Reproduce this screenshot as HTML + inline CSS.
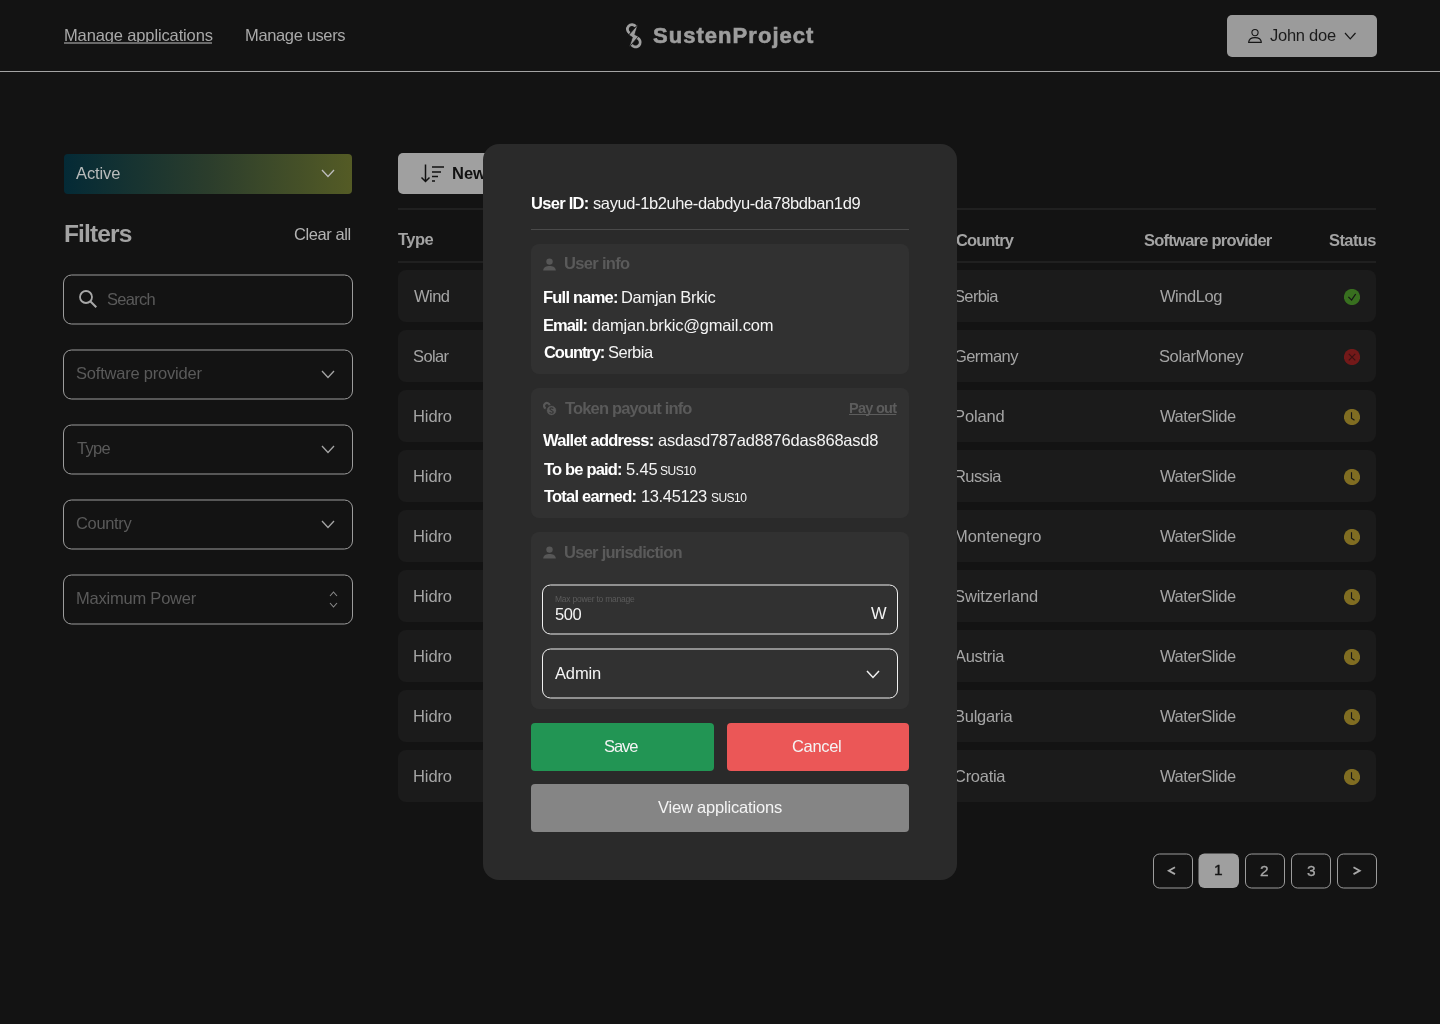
<!DOCTYPE html>
<html><head><meta charset="utf-8">
<style>
*{margin:0;padding:0;box-sizing:border-box}
html,body{width:1440px;height:1024px;overflow:hidden;background:#131313;font-family:"Liberation Sans",sans-serif}
.a{position:absolute;display:block}
.t{position:absolute;white-space:nowrap;line-height:1;will-change:transform}
.row{position:absolute;left:398px;width:978px;height:52px;background:#1b1b1b;border-radius:8px}
.card{position:absolute;left:531px;width:378px;background:#313131;border-radius:8px}
</style></head><body>

<!-- NAV -->
<div class="t" id="nav1" style="left:63.80px;top:27.00px;font-size:16.5px;font-weight:400;color:#a9a9a9;letter-spacing:-0.133px;">Manage applications</div>
<div class="a" style="left:64px;top:42px;width:148px;height:2px;background:#6a6a6a"></div>
<div class="t" id="nav2" style="left:244.60px;top:27.00px;font-size:16.5px;font-weight:400;color:#a9a9a9;letter-spacing:-0.364px;">Manage users</div>
<svg class="a" style="left:620px;top:18px" width="30" height="34" viewBox="620 18 30 34">
<path d="M635.77 26.56 A4.6 4.6 0 1 0 629.7 33.18" stroke="#9f9f9f" stroke-width="2.8" fill="none"/>
<path d="M634.2 37.9 A4.6 4.6 0 1 1 631.6 44.6" stroke="#9f9f9f" stroke-width="2.8" fill="none"/>
<path d="M637.9 24.6 L634.8 34.6 L638.4 36.4 L629.2 47.2 L632.4 37.3 L628.8 35.0 Z" fill="#9f9f9f" stroke="#131313" stroke-width="0.7" stroke-linejoin="miter"/>
</svg>
<div class="t" id="logo" style="left:653.25px;top:25.00px;font-size:22px;font-weight:700;color:#9d9d9d;letter-spacing:1.042px;-webkit-text-stroke:0.6px #9d9d9d;">SustenProject</div>
<div class="a" style="left:0;top:71px;width:1440px;height:1px;background:#a4a4a4"></div>
<div class="a" style="left:1227px;top:15px;width:150px;height:42px;background:#9b9b9b;border-radius:5px"></div>
<svg class="a" style="left:1247px;top:28px" width="16" height="16" viewBox="0 0 16 16">
<circle cx="8" cy="4.6" r="3.1" stroke="#161616" stroke-width="1.1" fill="none"/>
<path d="M1.6 14.4 C1.9 11.3 4.7 9.6 8 9.6 C11.3 9.6 14.1 11.3 14.4 14.4 Z" stroke="#161616" stroke-width="1.1" fill="none" stroke-linejoin="round"/>
</svg>
<div class="t" id="john" style="left:1270.10px;top:27.00px;font-size:16.5px;font-weight:400;color:#1c1c1c;letter-spacing:-0.257px;">John doe</div>
<svg class="a" style="left:1343px;top:31px" width="14.5" height="9.8" viewBox="-2 -2 14.5 9.8"><path d="M0 0L5.25 5.8L10.5 0" stroke="#161616" stroke-width="1.2" fill="none"/></svg>

<!-- SIDEBAR -->
<div class="a" style="left:64px;top:153.5px;width:288px;height:40px;border-radius:4px;background:linear-gradient(90deg,#042a36 0%,#2b3d2c 50%,#545b25 100%)"></div>
<div class="t" id="active" style="left:75.70px;top:165.00px;font-size:16.5px;font-weight:400;color:#b8bcbc;letter-spacing:-0.120px;">Active</div>
<svg class="a" style="left:320px;top:168px" width="16" height="10.5" viewBox="-2 -2 16 10.5"><path d="M0 0L6.0 6.5L12 0" stroke="#bdbdbd" stroke-width="1.3" fill="none"/></svg>
<div class="t" id="filters" style="left:64.00px;top:222.00px;font-size:24.5px;font-weight:700;color:#a3a3a3;letter-spacing:-0.867px;">Filters</div>
<div class="t" id="clear" style="left:293.90px;top:226.00px;font-size:16.5px;font-weight:400;color:#b3b3b3;letter-spacing:-0.425px;">Clear all</div>
<svg class="a" style="left:61px;top:273px" width="293" height="53"><rect x="2.5" y="2" width="289" height="49" rx="8" stroke="#9c9c9c" stroke-width="1" fill="none"/></svg>
<svg class="a" style="left:78px;top:289px" width="20" height="20" viewBox="0 0 20 20">
<circle cx="8" cy="8" r="6" stroke="#a8a8a8" stroke-width="1.8" fill="none"/>
<path d="M12.3 12.3L18.3 18.3" stroke="#a8a8a8" stroke-width="2" fill="none"/>
</svg>
<div class="t" id="search" style="left:107.25px;top:291.00px;font-size:16.5px;font-weight:400;color:#5a5a5a;letter-spacing:-0.700px;">Search</div>
<svg class="a" style="left:61px;top:348px" width="293" height="53"><rect x="2.5" y="2" width="289" height="49" rx="8" stroke="#9c9c9c" stroke-width="1" fill="none"/></svg>
<div class="t" id="ph1" style="left:75.80px;top:365.00px;font-size:16.5px;font-weight:400;color:#5a5a5a;letter-spacing:-0.213px;">Software provider</div>
<svg class="a" style="left:320px;top:369px" width="16" height="10.5" viewBox="-2 -2 16 10.5"><path d="M0 0L6.0 6.5L12 0" stroke="#a5a5a5" stroke-width="1.3" fill="none"/></svg>
<svg class="a" style="left:61px;top:423px" width="293" height="53"><rect x="2.5" y="2" width="289" height="49" rx="8" stroke="#9c9c9c" stroke-width="1" fill="none"/></svg>
<div class="t" id="ph2" style="left:76.80px;top:440.00px;font-size:16.5px;font-weight:400;color:#5a5a5a;letter-spacing:-0.733px;">Type</div>
<svg class="a" style="left:320px;top:444px" width="16" height="10.5" viewBox="-2 -2 16 10.5"><path d="M0 0L6.0 6.5L12 0" stroke="#a5a5a5" stroke-width="1.3" fill="none"/></svg>
<svg class="a" style="left:61px;top:498px" width="293" height="53"><rect x="2.5" y="2" width="289" height="49" rx="8" stroke="#9c9c9c" stroke-width="1" fill="none"/></svg>
<div class="t" id="ph3" style="left:75.80px;top:515.00px;font-size:16.5px;font-weight:400;color:#5a5a5a;letter-spacing:-0.333px;">Country</div>
<svg class="a" style="left:320px;top:519px" width="16" height="10.5" viewBox="-2 -2 16 10.5"><path d="M0 0L6.0 6.5L12 0" stroke="#a5a5a5" stroke-width="1.3" fill="none"/></svg>
<svg class="a" style="left:61px;top:573px" width="293" height="53"><rect x="2.5" y="2" width="289" height="49" rx="8" stroke="#9c9c9c" stroke-width="1" fill="none"/></svg>
<div class="t" id="ph4" style="left:75.80px;top:590.00px;font-size:16.5px;font-weight:400;color:#5a5a5a;letter-spacing:-0.217px;">Maximum Power</div>
<svg class="a" style="left:328px;top:601px" width="11" height="8" viewBox="-2 -2 11 8"><path d="M0 0L3.5 4L7 0" stroke="#8a8a8a" stroke-width="1.1" fill="none"/></svg>
<svg class="a" style="left:328px;top:590px" width="11" height="8" viewBox="-2 -2 11 8"><path d="M0 4L3.5 0L7 4" stroke="#8a8a8a" stroke-width="1.1" fill="none"/></svg>

<!-- TABLE -->
<div class="a" style="left:398px;top:153px;width:160px;height:40.5px;background:#a0a0a0;border-radius:5px"></div>
<svg class="a" style="left:419px;top:162px" width="28" height="22" viewBox="0 0 28 22">
<path d="M6.5 2.5V19.5M2.5 15.5L6.5 19.5L10.5 15.5" stroke="#111" stroke-width="1.5" fill="none"/>
<path d="M13 5H25M13 10H22M13 14.5H19M13 19H16" stroke="#111" stroke-width="1.5" fill="none"/>
</svg>
<div class="t" id="new" style="left:451.60px;top:165.00px;font-size:16.5px;font-weight:700;color:#111111;">New</div>
<div class="a" style="left:398px;top:208px;width:978px;height:2px;background:#202020"></div>
<div class="a" style="left:398px;top:261px;width:978px;height:2px;background:#202020"></div>
<div class="t" id="h1" style="left:398.40px;top:231.00px;font-size:16.5px;font-weight:700;color:#a3a3a3;letter-spacing:-0.533px;">Type</div>
<div class="t" id="h2" style="left:956.00px;top:232.00px;font-size:16.5px;font-weight:700;color:#a3a3a3;letter-spacing:-0.900px;">Country</div>
<div class="t" id="h3" style="left:1143.50px;top:232.00px;font-size:16.5px;font-weight:700;color:#a3a3a3;letter-spacing:-0.750px;">Software provider</div>
<div class="t" id="h4" style="left:1329.00px;top:232.00px;font-size:16.5px;font-weight:700;color:#a3a3a3;letter-spacing:-0.600px;">Status</div>
<div class="row" style="top:270.3px"></div>
<div class="t" id="ty0" style="left:414.20px;top:288.00px;font-size:16.5px;font-weight:400;color:#a5a5a5;letter-spacing:-0.533px;">Wind</div>
<div class="t" id="co0" style="left:953.50px;top:288.00px;font-size:16.5px;font-weight:400;color:#a5a5a5;letter-spacing:-0.644px;">Serbia</div>
<div class="t" id="pr0" style="left:1159.50px;top:288.00px;font-size:16.5px;font-weight:400;color:#a5a5a5;letter-spacing:-0.467px;">WindLog</div>
<svg class="a" style="left:1344px;top:288.5px" width="16" height="16" viewBox="0 0 16 16"><circle cx="8" cy="8" r="8.1" fill="#386f1f"/><path d="M4.4 7.9l3.2 3.2 4.1-6.1" stroke="#161616" stroke-width="1.3" fill="none"/></svg>
<div class="row" style="top:330.3px"></div>
<div class="t" id="ty1" style="left:413.20px;top:348.00px;font-size:16.5px;font-weight:400;color:#a5a5a5;letter-spacing:-0.600px;">Solar</div>
<div class="t" id="co1" style="left:953.50px;top:348.00px;font-size:16.5px;font-weight:400;color:#a5a5a5;letter-spacing:-0.578px;">Germany</div>
<div class="t" id="pr1" style="left:1158.50px;top:348.00px;font-size:16.5px;font-weight:400;color:#a5a5a5;letter-spacing:-0.400px;">SolarMoney</div>
<svg class="a" style="left:1344px;top:348.5px" width="16" height="16" viewBox="0 0 16 16"><circle cx="8" cy="8" r="8.1" fill="#731919"/><path d="M4.8 4.8l6.5 6.5M11.3 4.8l-6.5 6.5" stroke="#3a1212" stroke-width="1.2" fill="none"/></svg>
<div class="row" style="top:390.3px"></div>
<div class="t" id="ty2" style="left:413.20px;top:408.00px;font-size:16.5px;font-weight:400;color:#a5a5a5;letter-spacing:-0.100px;">Hidro</div>
<div class="t" id="co2" style="left:953.50px;top:408.00px;font-size:16.5px;font-weight:400;color:#a5a5a5;letter-spacing:-0.124px;">Poland</div>
<div class="t" id="pr2" style="left:1159.50px;top:408.00px;font-size:16.5px;font-weight:400;color:#a5a5a5;letter-spacing:-0.444px;">WaterSlide</div>
<svg class="a" style="left:1344px;top:408.5px" width="16" height="16" viewBox="0 0 16 16"><circle cx="8" cy="8" r="8.1" fill="#806d22"/><path d="M7.5 3.3V9.2L10.5 11.2" stroke="#161616" stroke-width="1.15" fill="none"/></svg>
<div class="row" style="top:450.3px"></div>
<div class="t" id="ty3" style="left:413.20px;top:468.00px;font-size:16.5px;font-weight:400;color:#a5a5a5;letter-spacing:-0.100px;">Hidro</div>
<div class="t" id="co3" style="left:953.50px;top:468.00px;font-size:16.5px;font-weight:400;color:#a5a5a5;letter-spacing:-0.604px;">Russia</div>
<div class="t" id="pr3" style="left:1159.50px;top:468.00px;font-size:16.5px;font-weight:400;color:#a5a5a5;letter-spacing:-0.444px;">WaterSlide</div>
<svg class="a" style="left:1344px;top:468.5px" width="16" height="16" viewBox="0 0 16 16"><circle cx="8" cy="8" r="8.1" fill="#806d22"/><path d="M7.5 3.3V9.2L10.5 11.2" stroke="#161616" stroke-width="1.15" fill="none"/></svg>
<div class="row" style="top:510.3px"></div>
<div class="t" id="ty4" style="left:413.20px;top:528.00px;font-size:16.5px;font-weight:400;color:#a5a5a5;letter-spacing:-0.100px;">Hidro</div>
<div class="t" id="co4" style="left:953.50px;top:528.00px;font-size:16.5px;font-weight:400;color:#a5a5a5;letter-spacing:-0.067px;">Montenegro</div>
<div class="t" id="pr4" style="left:1159.50px;top:528.00px;font-size:16.5px;font-weight:400;color:#a5a5a5;letter-spacing:-0.444px;">WaterSlide</div>
<svg class="a" style="left:1344px;top:528.5px" width="16" height="16" viewBox="0 0 16 16"><circle cx="8" cy="8" r="8.1" fill="#806d22"/><path d="M7.5 3.3V9.2L10.5 11.2" stroke="#161616" stroke-width="1.15" fill="none"/></svg>
<div class="row" style="top:570.3px"></div>
<div class="t" id="ty5" style="left:413.20px;top:588.00px;font-size:16.5px;font-weight:400;color:#a5a5a5;letter-spacing:-0.100px;">Hidro</div>
<div class="t" id="co5" style="left:953.50px;top:588.00px;font-size:16.5px;font-weight:400;color:#a5a5a5;letter-spacing:-0.104px;">Switzerland</div>
<div class="t" id="pr5" style="left:1159.50px;top:588.00px;font-size:16.5px;font-weight:400;color:#a5a5a5;letter-spacing:-0.444px;">WaterSlide</div>
<svg class="a" style="left:1344px;top:588.5px" width="16" height="16" viewBox="0 0 16 16"><circle cx="8" cy="8" r="8.1" fill="#806d22"/><path d="M7.5 3.3V9.2L10.5 11.2" stroke="#161616" stroke-width="1.15" fill="none"/></svg>
<div class="row" style="top:630.3px"></div>
<div class="t" id="ty6" style="left:413.20px;top:648.00px;font-size:16.5px;font-weight:400;color:#a5a5a5;letter-spacing:-0.100px;">Hidro</div>
<div class="t" id="co6" style="left:954.50px;top:648.00px;font-size:16.5px;font-weight:400;color:#a5a5a5;letter-spacing:-0.311px;">Austria</div>
<div class="t" id="pr6" style="left:1159.50px;top:648.00px;font-size:16.5px;font-weight:400;color:#a5a5a5;letter-spacing:-0.444px;">WaterSlide</div>
<svg class="a" style="left:1344px;top:648.5px" width="16" height="16" viewBox="0 0 16 16"><circle cx="8" cy="8" r="8.1" fill="#806d22"/><path d="M7.5 3.3V9.2L10.5 11.2" stroke="#161616" stroke-width="1.15" fill="none"/></svg>
<div class="row" style="top:690.3px"></div>
<div class="t" id="ty7" style="left:413.20px;top:708.00px;font-size:16.5px;font-weight:400;color:#a5a5a5;letter-spacing:-0.100px;">Hidro</div>
<div class="t" id="co7" style="left:953.50px;top:708.00px;font-size:16.5px;font-weight:400;color:#a5a5a5;letter-spacing:-0.273px;">Bulgaria</div>
<div class="t" id="pr7" style="left:1159.50px;top:708.00px;font-size:16.5px;font-weight:400;color:#a5a5a5;letter-spacing:-0.444px;">WaterSlide</div>
<svg class="a" style="left:1344px;top:708.5px" width="16" height="16" viewBox="0 0 16 16"><circle cx="8" cy="8" r="8.1" fill="#806d22"/><path d="M7.5 3.3V9.2L10.5 11.2" stroke="#161616" stroke-width="1.15" fill="none"/></svg>
<div class="row" style="top:750.3px"></div>
<div class="t" id="ty8" style="left:413.20px;top:768.00px;font-size:16.5px;font-weight:400;color:#a5a5a5;letter-spacing:-0.100px;">Hidro</div>
<div class="t" id="co8" style="left:953.50px;top:768.00px;font-size:16.5px;font-weight:400;color:#a5a5a5;letter-spacing:-0.278px;">Croatia</div>
<div class="t" id="pr8" style="left:1159.50px;top:768.00px;font-size:16.5px;font-weight:400;color:#a5a5a5;letter-spacing:-0.444px;">WaterSlide</div>
<svg class="a" style="left:1344px;top:768.5px" width="16" height="16" viewBox="0 0 16 16"><circle cx="8" cy="8" r="8.1" fill="#806d22"/><path d="M7.5 3.3V9.2L10.5 11.2" stroke="#161616" stroke-width="1.15" fill="none"/></svg>

<!-- PAGINATION -->
<svg class="a" style="left:1151px;top:852px" width="43" height="38"><rect x="2.5" y="2" width="39" height="34" rx="6" stroke="#9c9c9c" stroke-width="1" fill="none"/></svg>
<svg class="a" style="left:1166px;top:865px" width="12" height="12" viewBox="0 0 12 12"><path d="M9 2.3L2.8 5.7L9 9.1" stroke="#a8a8a8" stroke-width="1.8" fill="none"/></svg>
<svg class="a" style="left:1196px;top:851px" width="44" height="38"><rect x="2.5" y="2.5" width="40.5" height="34.5" rx="6" stroke="none" stroke-width="0" fill="#9f9f9f"/></svg>
<div class="t" id="pg1" style="left:1213.60px;top:862.00px;font-size:15.5px;font-weight:400;color:#161616;-webkit-text-stroke:0.4px #161616;">1</div>
<svg class="a" style="left:1243px;top:852px" width="43" height="38"><rect x="2.5" y="2" width="39" height="34" rx="6" stroke="#9c9c9c" stroke-width="1" fill="none"/></svg>
<div class="t" id="pg2" style="left:1260.20px;top:863.00px;font-size:15.5px;font-weight:400;color:#a8a8a8;-webkit-text-stroke:0.3px #a8a8a8;">2</div>
<svg class="a" style="left:1289px;top:852px" width="43" height="38"><rect x="2.5" y="2" width="39" height="34" rx="6" stroke="#9c9c9c" stroke-width="1" fill="none"/></svg>
<div class="t" id="pg3" style="left:1306.50px;top:863.00px;font-size:15.5px;font-weight:400;color:#a8a8a8;-webkit-text-stroke:0.3px #a8a8a8;">3</div>
<svg class="a" style="left:1335px;top:852px" width="43" height="38"><rect x="2.5" y="2" width="39" height="34" rx="6" stroke="#9c9c9c" stroke-width="1" fill="none"/></svg>
<svg class="a" style="left:1351px;top:865px" width="12" height="12" viewBox="0 0 12 12"><path d="M2.5 2.3L8.7 5.7L2.5 9.1" stroke="#a8a8a8" stroke-width="1.8" fill="none"/></svg>

<!-- MODAL -->
<div class="a" style="left:483px;top:144px;width:474px;height:735.5px;background:#2a2a2a;border-radius:16px"></div>
<div class="t" id="uid_l" style="left:530.80px;top:195.00px;font-size:16.5px;font-weight:700;color:#ffffff;letter-spacing:-0.714px;">User ID:</div>
<div class="t" id="uid_v" style="left:592.50px;top:195.00px;font-size:16.5px;font-weight:400;color:#f4f4f4;letter-spacing:-0.394px;">sayud-1b2uhe-dabdyu-da78bdban1d9</div>
<div class="a" style="left:531px;top:229px;width:378px;height:1px;background:#4a4a4a"></div>

<div class="card" style="top:244px;height:130px"></div>
<svg class="a" style="left:542px;top:257px" width="15" height="15" viewBox="0 0 15 15">
<circle cx="7.5" cy="4.6" r="3.2" fill="#575757"/>
<path d="M1.2 13.6 C1.2 10.2 4.2 9 7.5 9 C10.8 9 13.8 10.2 13.8 13.6 Z" fill="#575757"/>
</svg>
<div class="t" id="ui_t" style="left:563.80px;top:255.00px;font-size:16.5px;font-weight:700;color:#5a5a5a;letter-spacing:-0.675px;">User info</div>
<div class="t" id="fn_l" style="left:542.90px;top:289.00px;font-size:16.5px;font-weight:700;color:#ffffff;letter-spacing:-0.778px;">Full name:</div>
<div class="t" id="fn_v" style="left:621.20px;top:289.00px;font-size:16.5px;font-weight:400;color:#f4f4f4;letter-spacing:-0.309px;">Damjan Brkic</div>
<div class="t" id="em_l" style="left:542.90px;top:317.00px;font-size:16.5px;font-weight:700;color:#ffffff;letter-spacing:-0.920px;">Email:</div>
<div class="t" id="em_v" style="left:591.90px;top:317.00px;font-size:16.5px;font-weight:400;color:#f4f4f4;letter-spacing:-0.190px;">damjan.brkic@gmail.com</div>
<div class="t" id="cn_l" style="left:543.90px;top:344.00px;font-size:16.5px;font-weight:700;color:#ffffff;letter-spacing:-1.057px;">Country:</div>
<div class="t" id="cn_v" style="left:608.30px;top:344.00px;font-size:16.5px;font-weight:400;color:#f4f4f4;letter-spacing:-0.520px;">Serbia</div>

<div class="card" style="top:387.5px;height:130.5px"></div>
<svg class="a" style="left:538px;top:396px" width="24" height="24" viewBox="538 396 24 24">
<path d="M549.76 405.4 A2.9 2.9 0 1 0 545.67 408.53" stroke="#585858" stroke-width="2.2" fill="none"/>
<circle cx="551.5" cy="410.5" r="5.0" fill="#585858" stroke="#313131" stroke-width="0.9"/>
<path d="M553.1 408.9 C553.0 408.1 552.3 407.8 551.5 407.8 C550.6 407.8 549.9 408.3 549.9 409.0 C549.9 410.6 553.2 410.3 553.2 411.9 C553.2 412.7 552.4 413.2 551.5 413.2 C550.6 413.2 549.9 412.8 549.8 412.0" stroke="#333" stroke-width="1.15" fill="none"/>
</svg>
<div class="t" id="tk_t" style="left:564.90px;top:400.00px;font-size:16.5px;font-weight:700;color:#5a5a5a;letter-spacing:-0.838px;">Token payout info</div>
<div class="t" id="payout" style="left:848.80px;top:401.00px;font-size:14.5px;font-weight:700;color:#5c5c5c;letter-spacing:-0.733px;text-decoration:underline;text-underline-offset:1px;text-decoration-skip-ink:none;">Pay out</div>
<div class="t" id="wa_l" style="left:543.20px;top:432.00px;font-size:16.5px;font-weight:700;color:#ffffff;letter-spacing:-0.729px;">Wallet address:</div>
<div class="t" id="wa_v" style="left:658.00px;top:432.00px;font-size:16.5px;font-weight:400;color:#f4f4f4;letter-spacing:-0.217px;">asdasd787ad8876das868asd8</div>
<div class="t" id="tp_l" style="left:543.70px;top:461.00px;font-size:16.5px;font-weight:700;color:#ffffff;letter-spacing:-0.820px;">To be paid:</div>
<div class="t" id="tp_v" style="left:625.80px;top:461.00px;font-size:16.5px;font-weight:400;color:#f4f4f4;letter-spacing:-0.133px;">5.45</div>
<div class="t" id="tp_s" style="left:660.00px;top:465.00px;font-size:12px;font-weight:400;color:#f4f4f4;letter-spacing:-0.450px;">SUS10</div>
<div class="t" id="te_l" style="left:543.70px;top:488.00px;font-size:16.5px;font-weight:700;color:#ffffff;letter-spacing:-0.783px;">Total earned:</div>
<div class="t" id="te_v" style="left:641.00px;top:488.00px;font-size:16.5px;font-weight:400;color:#f4f4f4;letter-spacing:-0.371px;">13.45123</div>
<div class="t" id="te_s" style="left:711.40px;top:492.00px;font-size:12px;font-weight:400;color:#f4f4f4;letter-spacing:-0.550px;">SUS10</div>

<div class="card" style="top:531.5px;height:177.5px"></div>
<svg class="a" style="left:542px;top:545px" width="15" height="15" viewBox="0 0 15 15">
<circle cx="7.5" cy="4.6" r="3.2" fill="#575757"/>
<path d="M1.2 13.6 C1.2 10.2 4.2 9 7.5 9 C10.8 9 13.8 10.2 13.8 13.6 Z" fill="#575757"/>
</svg>
<div class="t" id="ju_t" style="left:563.50px;top:544.00px;font-size:16.5px;font-weight:700;color:#5a5a5a;letter-spacing:-0.725px;">User jurisdiction</div>
<svg class="a" style="left:540px;top:583px" width="359" height="53"><rect x="2.5" y="2" width="355" height="49" rx="8" stroke="#f0f0f0" stroke-width="1" fill="none"/></svg>
<div class="t" id="mp_l" style="left:555.00px;top:595.00px;font-size:8.5px;font-weight:400;color:#5b5b5b;letter-spacing:-0.244px;">Max power to manage</div>
<div class="t" id="mp_v" style="left:554.90px;top:606.00px;font-size:16.5px;font-weight:400;color:#f4f4f4;letter-spacing:-0.400px;">500</div>
<div class="t" id="mp_w" style="left:871.40px;top:605.00px;font-size:16.5px;font-weight:400;color:#f4f4f4;">W</div>
<svg class="a" style="left:540px;top:647px" width="359" height="53"><rect x="2.5" y="2" width="355" height="49" rx="8" stroke="#f0f0f0" stroke-width="1" fill="none"/></svg>
<div class="t" id="admin" style="left:555.10px;top:665.00px;font-size:16.5px;font-weight:400;color:#f4f4f4;letter-spacing:-0.150px;">Admin</div>
<svg class="a" style="left:865px;top:668.5px" width="16" height="10.5" viewBox="-2 -2 16 10.5"><path d="M0 0L6.0 6.5L12 0" stroke="#f0f0f0" stroke-width="1.5" fill="none"/></svg>

<div class="a" style="left:531px;top:723px;width:182.5px;height:47.5px;background:#229554;border-radius:4px"></div>
<div class="t" id="save" style="left:604.00px;top:738.00px;font-size:16.5px;font-weight:400;color:#f4f4f4;letter-spacing:-1.067px;">Save</div>
<div class="a" style="left:726.5px;top:723px;width:182.5px;height:47.5px;background:#eb5757;border-radius:4px"></div>
<div class="t" id="cancel" style="left:792.10px;top:738.00px;font-size:16.5px;font-weight:400;color:#f4f4f4;letter-spacing:-0.320px;">Cancel</div>
<div class="a" style="left:531px;top:784px;width:378px;height:47.5px;background:#858585;border-radius:4px"></div>
<div class="t" id="viewapp" style="left:657.90px;top:799.00px;font-size:16.5px;font-weight:400;color:#f4f4f4;letter-spacing:-0.188px;">View applications</div>

</body></html>
